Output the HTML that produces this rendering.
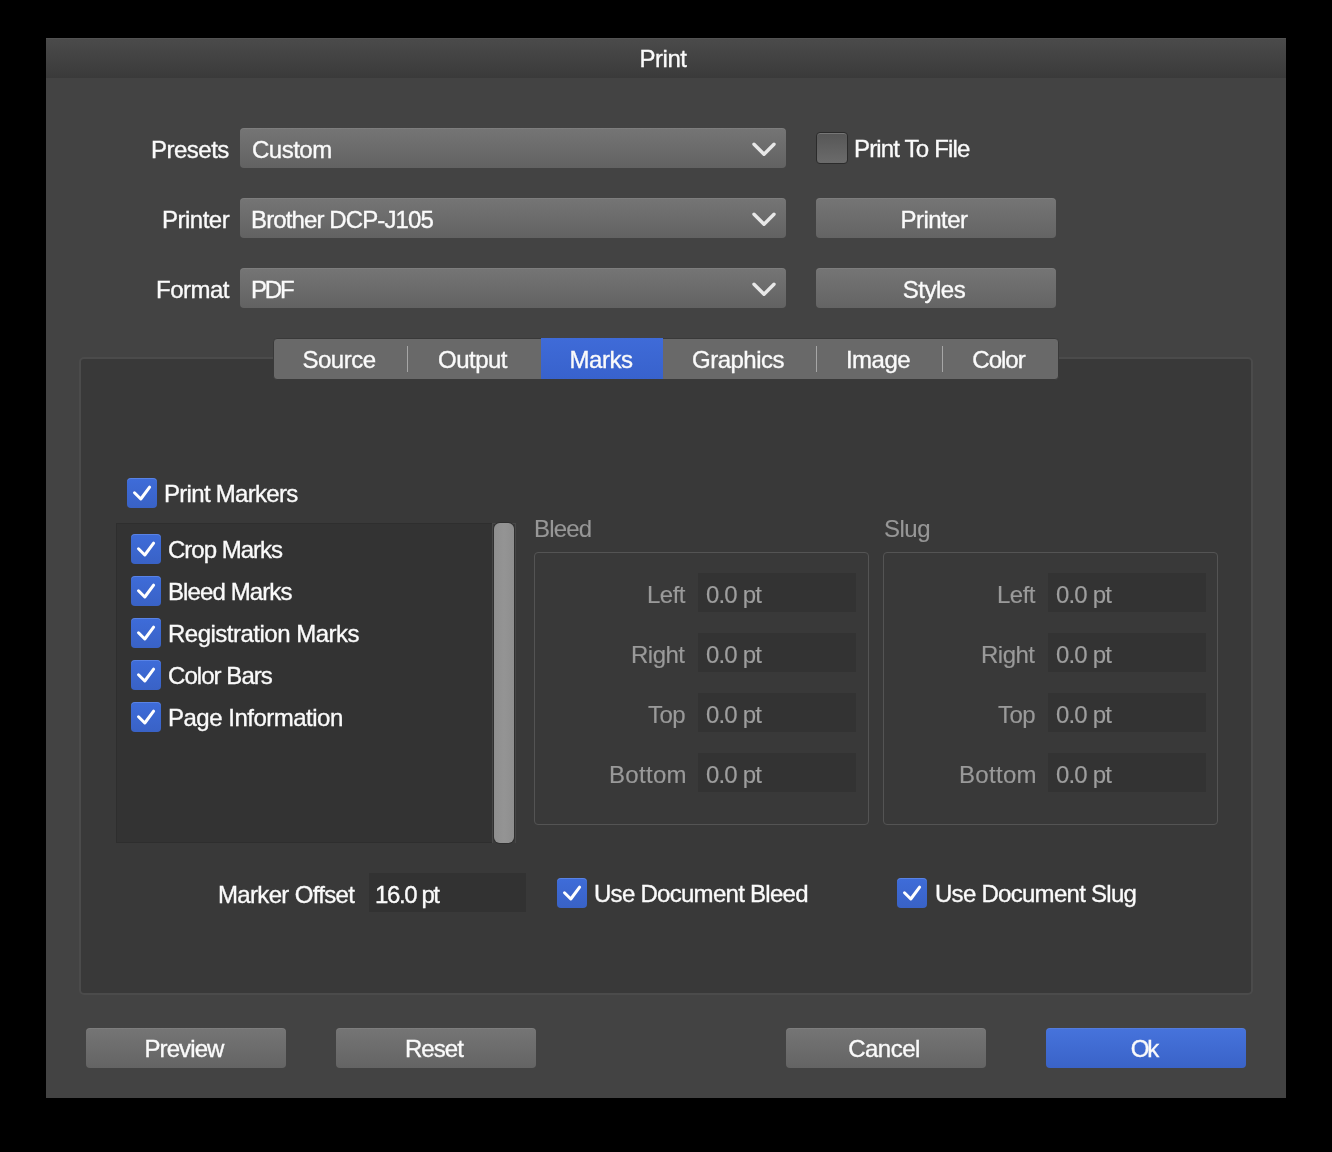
<!DOCTYPE html>
<html><head><meta charset="utf-8"><style>
*{box-sizing:border-box;margin:0;padding:0}
html,body{width:1332px;height:1152px;background:#000;overflow:hidden;font-family:"Liberation Sans",sans-serif}
.a{position:absolute}
.t{position:absolute;font-size:24px;letter-spacing:-0.5px;line-height:30px;white-space:nowrap;color:#fafafa;-webkit-text-stroke:0.35px currentColor;will-change:transform}
.win{position:absolute;left:46px;top:38px;width:1240px;height:1060px;background:#434343}
.title{position:absolute;left:46px;top:38px;width:1240px;height:40px;background:linear-gradient(#4b4b4b,#3a3a3a);box-shadow:inset 0 1px 0 #525252}
.dd{position:absolute;left:240px;width:546px;height:40px;border-radius:4px;background:linear-gradient(#757575,#626262);box-shadow:inset 0 1px 0 rgba(255,255,255,0.07)}
.btn{position:absolute;height:40px;border-radius:4px;background:linear-gradient(#757575,#646464);box-shadow:inset 0 1px 0 rgba(255,255,255,0.07)}
.blue{background:linear-gradient(#4673dc,#3a63c8)}
.cb{position:absolute;width:30px;height:30px;border-radius:4px;background:linear-gradient(#3e6cd9,#3962c6);box-shadow:inset 0 1px 0 rgba(140,175,255,0.35)}
.cb svg{position:absolute;left:0;top:0}
.fld{position:absolute;width:158px;height:39px;background:#333333}
.lbl{color:#9a9a9a;-webkit-text-stroke:0.15px #9a9a9a !important}
.val{color:#9e9e9e;-webkit-text-stroke:0.15px #9e9e9e !important}
.grp{position:absolute;width:335px;height:273px;border:1.5px solid #545454;border-radius:4px}
</style></head><body>
<div class="win"></div>
<div class="title"></div>
<div class="t" style="left:43px;width:1240px;text-align:center;top:44px">Print</div>

<!-- rows -->
<div class="t" style="right:1103px;top:135px">Presets</div>
<div class="dd" style="top:128px"></div>
<div class="t" style="left:252px;top:135px">Custom</div>
<svg class="a" style="left:750px;top:140px" width="28" height="18" viewBox="0 0 28 18"><path d="M4 4.2 L14 14.2 L24 4.2" fill="none" stroke="#e8e8e8" stroke-width="3.4" stroke-linecap="round" stroke-linejoin="round"/></svg>

<div class="t" style="right:1103px;top:205px">Printer</div>
<div class="dd" style="top:198px"></div>
<div class="t" style="left:250.5px;top:205px;letter-spacing:-0.88px">Brother DCP-J105</div>
<svg class="a" style="left:750px;top:210px" width="28" height="18" viewBox="0 0 28 18"><path d="M4 4.2 L14 14.2 L24 4.2" fill="none" stroke="#e8e8e8" stroke-width="3.4" stroke-linecap="round" stroke-linejoin="round"/></svg>

<div class="t" style="right:1103px;top:275px">Format</div>
<div class="dd" style="top:268px"></div>
<div class="t" style="left:251px;top:275px;letter-spacing:-2.2px">PDF</div>
<svg class="a" style="left:750px;top:280px" width="28" height="18" viewBox="0 0 28 18"><path d="M4 4.2 L14 14.2 L24 4.2" fill="none" stroke="#e8e8e8" stroke-width="3.4" stroke-linecap="round" stroke-linejoin="round"/></svg>

<div class="a" style="left:816px;top:132px;width:32px;height:32px;border-radius:4px;border:1.5px solid #2b2b2b;background:linear-gradient(#565656,#6b6b6b);box-shadow:inset 0 1px 0 #777"></div>
<div class="t" style="left:854px;top:134px;letter-spacing:-0.83px">Print To File</div>

<div class="btn" style="left:816px;top:198px;width:240px"></div>
<div class="t" style="left:814px;width:240px;text-align:center;top:205px">Printer</div>
<div class="btn" style="left:816px;top:268px;width:240px"></div>
<div class="t" style="left:814px;width:240px;text-align:center;top:275px">Styles</div>

<!-- panel -->
<div class="a" style="left:79px;top:357px;width:1174px;height:638px;border:2px solid #4b4b4b;border-radius:5px;background:#393939"></div>

<!-- tabs -->
<div class="a" style="left:273px;top:338px;width:786px;height:42px;border-radius:4px;background:#696969;border:1px solid #393939"></div>
<div class="a" style="left:541px;top:338px;width:122px;height:41px;background:linear-gradient(#3f6bd8,#3862cc)"></div>
<div class="a" style="left:407px;top:346px;width:1px;height:26px;background:#a6a6a6"></div>
<div class="a" style="left:816px;top:346px;width:1px;height:26px;background:#a6a6a6"></div>
<div class="a" style="left:942px;top:346px;width:1px;height:26px;background:#a6a6a6"></div>
<div class="t" style="left:272px;width:134px;text-align:center;top:345px">Source</div>
<div class="t" style="left:406px;width:133px;text-align:center;top:345px">Output</div>
<div class="t" style="left:540px;width:122px;text-align:center;top:345px">Marks</div>
<div class="t" style="left:661px;width:154px;text-align:center;top:345px">Graphics</div>
<div class="t" style="left:815px;width:126px;text-align:center;top:345px">Image</div>
<div class="t" style="left:941px;width:115px;text-align:center;top:345px;letter-spacing:-1.0px">Color</div>

<!-- print markers -->
<div class="cb" style="left:127px;top:478px"><svg width="30" height="30" viewBox="0 0 30 30"><path d="M7.5 14.8 L13.8 21 L22.6 9.2" fill="none" stroke="#fff" stroke-width="3" stroke-linecap="round" stroke-linejoin="round"/></svg></div>
<div class="t" style="left:164px;top:479px;letter-spacing:-0.7px">Print Markers</div>

<div class="a" style="left:116px;top:523px;width:376px;height:320px;background:#333333;border:1px solid #2e2e2e;border-right:none"></div>
<div class="a" style="left:492px;top:523px;width:24px;height:320px;background:#3b3b3b;border:1.5px solid #474747;border-bottom:none"></div>
<div class="a" style="left:494px;top:523px;width:20px;height:320px;border-radius:6px;background:linear-gradient(90deg,#8e8e8e,#949494 50%,#8e8e8e);box-shadow:0 0 0 1px #2f2f2f"></div>

<div class="cb" style="left:131px;top:534px"><svg width="30" height="30" viewBox="0 0 30 30"><path d="M7.5 14.8 L13.8 21 L22.6 9.2" fill="none" stroke="#fff" stroke-width="3" stroke-linecap="round" stroke-linejoin="round"/></svg></div>
<div class="t" style="left:168px;top:535px;letter-spacing:-1.0px">Crop Marks</div>
<div class="cb" style="left:131px;top:576px"><svg width="30" height="30" viewBox="0 0 30 30"><path d="M7.5 14.8 L13.8 21 L22.6 9.2" fill="none" stroke="#fff" stroke-width="3" stroke-linecap="round" stroke-linejoin="round"/></svg></div>
<div class="t" style="left:168px;top:577px;letter-spacing:-0.9px">Bleed Marks</div>
<div class="cb" style="left:131px;top:618px"><svg width="30" height="30" viewBox="0 0 30 30"><path d="M7.5 14.8 L13.8 21 L22.6 9.2" fill="none" stroke="#fff" stroke-width="3" stroke-linecap="round" stroke-linejoin="round"/></svg></div>
<div class="t" style="left:168px;top:619px">Registration Marks</div>
<div class="cb" style="left:131px;top:660px"><svg width="30" height="30" viewBox="0 0 30 30"><path d="M7.5 14.8 L13.8 21 L22.6 9.2" fill="none" stroke="#fff" stroke-width="3" stroke-linecap="round" stroke-linejoin="round"/></svg></div>
<div class="t" style="left:168px;top:661px;letter-spacing:-0.95px">Color Bars</div>
<div class="cb" style="left:131px;top:702px"><svg width="30" height="30" viewBox="0 0 30 30"><path d="M7.5 14.8 L13.8 21 L22.6 9.2" fill="none" stroke="#fff" stroke-width="3" stroke-linecap="round" stroke-linejoin="round"/></svg></div>
<div class="t" style="left:168px;top:703px">Page Information</div>

<!-- bleed / slug -->
<div class="t" style="left:534px;top:514px;color:#979797;-webkit-text-stroke:0.12px #979797;letter-spacing:-0.8px">Bleed</div>
<div class="grp" style="left:534px;top:552px"></div>
<div class="t" style="left:884px;top:514px;color:#979797;-webkit-text-stroke:0.12px #979797;letter-spacing:-0.5px">Slug</div>
<div class="grp" style="left:883px;top:552px"></div>
<div class="t lbl" style="right:647px;top:580px">Left</div>
<div class="fld" style="left:698px;top:573px"></div>
<div class="t val" style="left:706px;top:580px;letter-spacing:-0.85px">0.0 pt</div>
<div class="t lbl" style="right:647px;top:640px">Right</div>
<div class="fld" style="left:698px;top:633px"></div>
<div class="t val" style="left:706px;top:640px;letter-spacing:-0.85px">0.0 pt</div>
<div class="t lbl" style="right:647px;top:700px">Top</div>
<div class="fld" style="left:698px;top:693px"></div>
<div class="t val" style="left:706px;top:700px;letter-spacing:-0.85px">0.0 pt</div>
<div class="t lbl" style="right:645px;top:760px;letter-spacing:0.3px">Bottom</div>
<div class="fld" style="left:698px;top:753px"></div>
<div class="t val" style="left:706px;top:760px;letter-spacing:-0.85px">0.0 pt</div>
<div class="t lbl" style="right:297px;top:580px">Left</div>
<div class="fld" style="left:1048px;top:573px"></div>
<div class="t val" style="left:1056px;top:580px;letter-spacing:-0.85px">0.0 pt</div>
<div class="t lbl" style="right:297px;top:640px">Right</div>
<div class="fld" style="left:1048px;top:633px"></div>
<div class="t val" style="left:1056px;top:640px;letter-spacing:-0.85px">0.0 pt</div>
<div class="t lbl" style="right:297px;top:700px">Top</div>
<div class="fld" style="left:1048px;top:693px"></div>
<div class="t val" style="left:1056px;top:700px;letter-spacing:-0.85px">0.0 pt</div>
<div class="t lbl" style="right:295px;top:760px;letter-spacing:0.3px">Bottom</div>
<div class="fld" style="left:1048px;top:753px"></div>
<div class="t val" style="left:1056px;top:760px;letter-spacing:-0.85px">0.0 pt</div>

<!-- marker offset row -->
<div class="t" style="right:978px;top:880px;letter-spacing:-0.67px">Marker Offset</div>
<div class="a" style="left:369px;top:873px;width:157px;height:39px;background:#323232"></div>
<div class="t" style="left:375px;top:880px;letter-spacing:-1.4px">16.0 pt</div>
<div class="cb" style="left:557px;top:878px"><svg width="30" height="30" viewBox="0 0 30 30"><path d="M7.5 14.8 L13.8 21 L22.6 9.2" fill="none" stroke="#fff" stroke-width="3" stroke-linecap="round" stroke-linejoin="round"/></svg></div>
<div class="t" style="left:594px;top:879px;letter-spacing:-0.72px">Use Document Bleed</div>
<div class="cb" style="left:897px;top:878px"><svg width="30" height="30" viewBox="0 0 30 30"><path d="M7.5 14.8 L13.8 21 L22.6 9.2" fill="none" stroke="#fff" stroke-width="3" stroke-linecap="round" stroke-linejoin="round"/></svg></div>
<div class="t" style="left:934.5px;top:879px;letter-spacing:-0.72px">Use Document Slug</div>

<!-- bottom buttons -->
<div class="btn" style="left:86px;top:1028px;width:200px"></div>
<div class="t" style="left:84px;width:200px;text-align:center;top:1034px;letter-spacing:-0.9px">Preview</div>
<div class="btn" style="left:336px;top:1028px;width:200px"></div>
<div class="t" style="left:334px;width:200px;text-align:center;top:1034px;letter-spacing:-0.9px">Reset</div>
<div class="btn" style="left:786px;top:1028px;width:200px"></div>
<div class="t" style="left:784px;width:200px;text-align:center;top:1034px">Cancel</div>
<div class="btn blue" style="left:1046px;top:1028px;width:200px"></div>
<div class="t" style="left:1044px;width:200px;text-align:center;top:1034px;letter-spacing:-2px">Ok</div>
</body></html>
